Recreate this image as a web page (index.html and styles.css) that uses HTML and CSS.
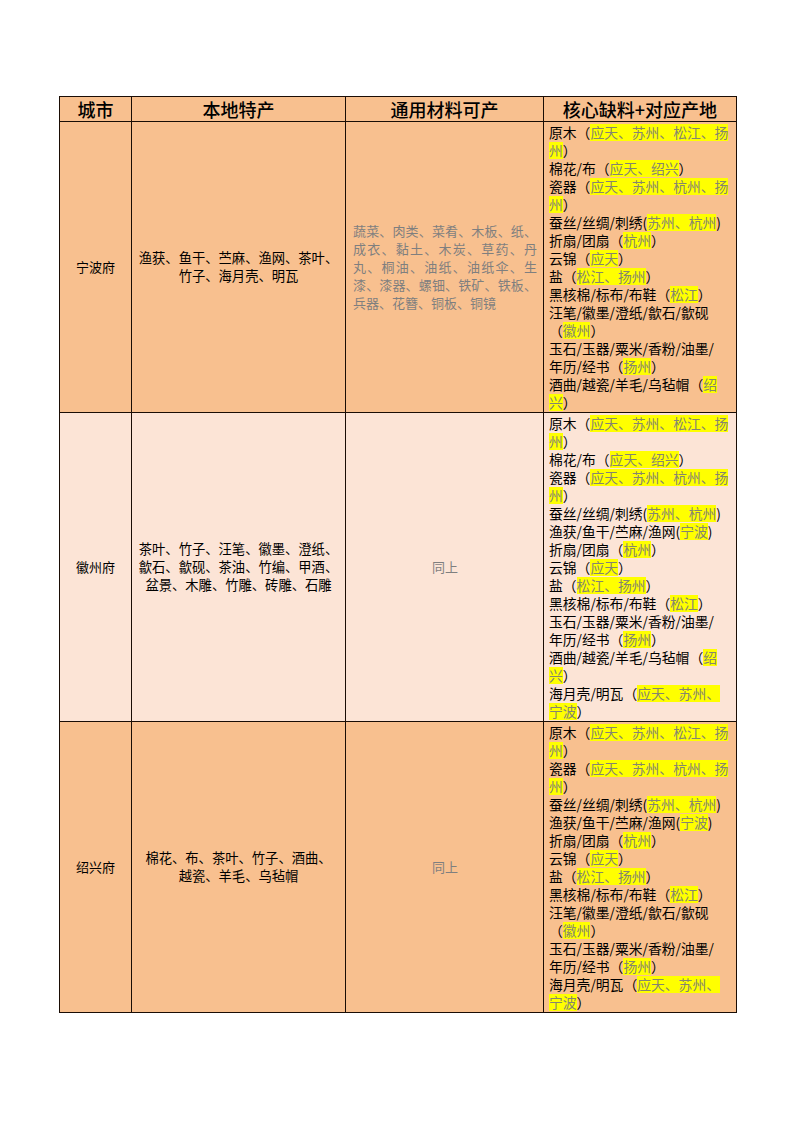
FILE: index.html
```html
<!DOCTYPE html>
<html lang="zh">
<head>
<meta charset="utf-8">
<link rel="stylesheet" href="styles.css">
</head>
<body>
<table class="sheet">
  <colgroup>
    <col class="c-city"><col class="c-local"><col class="c-common"><col class="c-core">
  </colgroup>
  <thead>
    <tr class="head">
      <th>城市</th><th>本地特产</th><th>通用材料可产</th><th>核心缺料+对应产地</th>
    </tr>
  </thead>
  <tbody>
    <tr class="row-dark">
      <td class="city">宁波府</td>
      <td class="local">渔获、鱼干、苎麻、渔网、茶叶、<br>竹子、海月壳、明瓦</td>
      <td class="common">
        <span class="jl">蔬菜、肉类、菜肴、木板、纸、</span>
        <span class="jl">成衣、黏土、木炭、草药、丹</span>
        <span class="jl">丸、桐油、油纸、油纸伞、生</span>
        <span class="jl">漆、漆器、螺钿、铁矿、铁板、</span>
        <span class="jlast">兵器、花簪、铜板、铜镜</span>
      </td>
      <td class="core">
        <div class="ln">原木（<span class="hl">应天、苏州、松江、扬</span></div>
        <div class="ln"><span class="hl">州</span>）</div>
        <div class="ln">棉花/布（<span class="hl">应天、绍兴</span>）</div>
        <div class="ln">瓷器（<span class="hl">应天、苏州、杭州、扬</span></div>
        <div class="ln"><span class="hl">州</span>）</div>
        <div class="ln">蚕丝/丝绸/刺绣(<span class="hl">苏州、杭州</span>)</div>
        <div class="ln">折扇/团扇（<span class="hl">杭州</span>）</div>
        <div class="ln">云锦（<span class="hl">应天</span>）</div>
        <div class="ln">盐（<span class="hl">松江、扬州</span>）</div>
        <div class="ln">黑核棉/标布/布鞋（<span class="hl">松江</span>）</div>
        <div class="ln">汪笔/徽墨/澄纸/歙石/歙砚</div>
        <div class="ln">（<span class="hl">徽州</span>）</div>
        <div class="ln">玉石/玉器/粟米/香粉/油墨/</div>
        <div class="ln">年历/经书（<span class="hl">扬州</span>）</div>
        <div class="ln">酒曲/越瓷/羊毛/乌毡帽（<span class="hl">绍</span></div>
        <div class="ln"><span class="hl">兴</span>）</div>
      </td>
    </tr>
    <tr class="row-light">
      <td class="city">徽州府</td>
      <td class="local">茶叶、竹子、汪笔、徽墨、澄纸、<br>歙石、歙砚、茶油、竹编、甲酒、<br>盆景、木雕、竹雕、砖雕、石雕</td>
      <td class="common center">同上</td>
      <td class="core">
        <div class="ln">原木（<span class="hl">应天、苏州、松江、扬</span></div>
        <div class="ln"><span class="hl">州</span>）</div>
        <div class="ln">棉花/布（<span class="hl">应天、绍兴</span>）</div>
        <div class="ln">瓷器（<span class="hl">应天、苏州、杭州、扬</span></div>
        <div class="ln"><span class="hl">州</span>）</div>
        <div class="ln">蚕丝/丝绸/刺绣(<span class="hl">苏州、杭州</span>)</div>
        <div class="ln">渔获/鱼干/苎麻/渔网(<span class="hl">宁波</span>)</div>
        <div class="ln">折扇/团扇（<span class="hl">杭州</span>）</div>
        <div class="ln">云锦（<span class="hl">应天</span>）</div>
        <div class="ln">盐（<span class="hl">松江、扬州</span>）</div>
        <div class="ln">黑核棉/标布/布鞋（<span class="hl">松江</span>）</div>
        <div class="ln">玉石/玉器/粟米/香粉/油墨/</div>
        <div class="ln">年历/经书（<span class="hl">扬州</span>）</div>
        <div class="ln">酒曲/越瓷/羊毛/乌毡帽（<span class="hl">绍</span></div>
        <div class="ln"><span class="hl">兴</span>）</div>
        <div class="ln">海月壳/明瓦（<span class="hl">应天、苏州、</span></div>
        <div class="ln"><span class="hl">宁波</span>）</div>
      </td>
    </tr>
    <tr class="row-dark">
      <td class="city">绍兴府</td>
      <td class="local">棉花、布、茶叶、竹子、酒曲、<br>越瓷、羊毛、乌毡帽</td>
      <td class="common center">同上</td>
      <td class="core">
        <div class="ln">原木（<span class="hl">应天、苏州、松江、扬</span></div>
        <div class="ln"><span class="hl">州</span>）</div>
        <div class="ln">瓷器（<span class="hl">应天、苏州、杭州、扬</span></div>
        <div class="ln"><span class="hl">州</span>）</div>
        <div class="ln">蚕丝/丝绸/刺绣(<span class="hl">苏州、杭州</span>)</div>
        <div class="ln">渔获/鱼干/苎麻/渔网(<span class="hl">宁波</span>)</div>
        <div class="ln">折扇/团扇（<span class="hl">杭州</span>）</div>
        <div class="ln">云锦（<span class="hl">应天</span>）</div>
        <div class="ln">盐（<span class="hl">松江、扬州</span>）</div>
        <div class="ln">黑核棉/标布/布鞋（<span class="hl">松江</span>）</div>
        <div class="ln">汪笔/徽墨/澄纸/歙石/歙砚</div>
        <div class="ln">（<span class="hl">徽州</span>）</div>
        <div class="ln">玉石/玉器/粟米/香粉/油墨/</div>
        <div class="ln">年历/经书（<span class="hl">扬州</span>）</div>
        <div class="ln">海月壳/明瓦（<span class="hl">应天、苏州、</span></div>
        <div class="ln"><span class="hl">宁波</span>）</div>
      </td>
    </tr>
  </tbody>
</table>
</body>
</html>
```

FILE: styles.css
```css
html, body {
  margin: 0;
  padding: 0;
  background: #ffffff;
}

body {
  font-family: "Noto Sans CJK SC", "Liberation Sans", sans-serif;
  color: #000000;
}

.sheet {
  margin: 96px 0 0 59px;
  border-collapse: collapse;
  table-layout: fixed;
  width: 677px;
}

.c-city { width: 72px; }
.c-local { width: 214px; }
.c-common { width: 198px; }
.c-core { width: 193px; }

.sheet th,
.sheet td {
  border: 1px solid #1a0d05;
  padding: 0;
}

.sheet .head th {
  background: #f8c08f;
  height: 24px;
  font-size: 18px;
  line-height: 22px;
  font-weight: 500;
  text-align: center;
  vertical-align: middle;
}

.sheet .row-dark td { background: #f8c08f; }
.sheet .row-light td { background: #fce4d6; }

.sheet .city {
  text-align: center;
  vertical-align: middle;
  font-size: 13px;
  line-height: 18px;
}

.sheet .local {
  text-align: center;
  vertical-align: middle;
  font-size: 13.3px;
  line-height: 18px;
  padding: 0 4px;
  white-space: nowrap;
}

.sheet .common {
  vertical-align: middle;
  font-size: 13px;
  line-height: 18px;
  color: #7f7f7f;
  padding: 0 6px 0 7px;
}

.sheet .common.center {
  text-align: center;
}

.jl {
  display: block;
  text-align: justify;
  text-align-last: justify;
  white-space: nowrap;
}

.jlast {
  display: block;
  text-align: left;
  white-space: nowrap;
}

.sheet .core {
  vertical-align: top;
  font-size: 13.8px;
  padding: 1px 2px 1px 5px;
}

.ln {
  height: 18px;
  line-height: 18px;
  white-space: nowrap;
}

.hl {
  display: inline-block;
  background: #ffff00;
  color: #858570;
  line-height: 17px;
  height: 17px;
  vertical-align: top;
  margin-top: 1px;
}
```
